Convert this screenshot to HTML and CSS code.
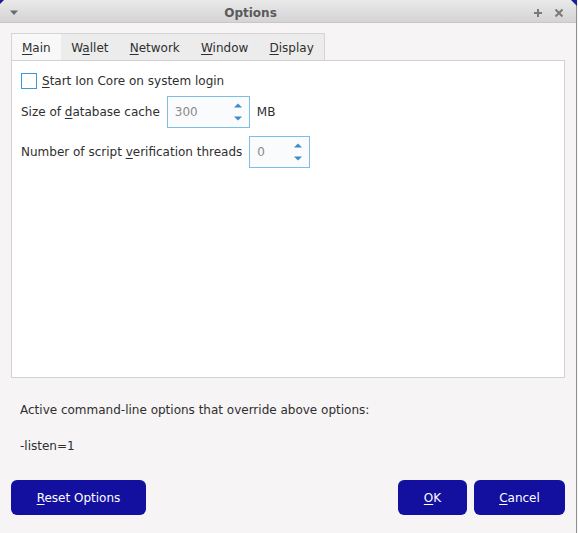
FILE: index.html
```html
<!DOCTYPE html>
<html>
<head>
<meta charset="utf-8">
<link rel="stylesheet" href="styles.css">
</head>
<body>
<div class="window">
  <div class="corner corner-tl"></div>
  <div class="corner corner-tr"></div>
  <div class="titlebar">
    <div class="tb-left">
      <svg width="10" height="6" viewBox="0 0 10 6"><path d="M1 0.5 L9 0.5 L5 5 Z" fill="#6a6a6a"/></svg>
    </div>
    <div class="tb-title">Options</div>
    <div class="tb-right">
      <svg width="10" height="10" viewBox="0 0 10 10"><path d="M5 1 V9 M1 5 H9" stroke="#7a7a7a" stroke-width="2"/></svg>
      <svg width="10" height="10" viewBox="0 0 10 10"><path d="M1.5 1.5 L8.5 8.5 M8.5 1.5 L1.5 8.5" stroke="#7a7a7a" stroke-width="2"/></svg>
    </div>
  </div>
  <div class="content">
    <div class="tabs">
      <div class="tab active"><u>M</u>ain</div>
      <div class="tab">W<u>a</u>llet</div>
      <div class="tab"><u>N</u>etwork</div>
      <div class="tab"><u>W</u>indow</div>
      <div class="tab"><u>D</u>isplay</div>
    </div>
    <div class="pane">
      <div class="row check-row">
        <span class="checkbox"></span>
        <span><u>S</u>tart Ion Core on system login</span>
      </div>
      <div class="row">
        <span>Size of <u>d</u>atabase cache</span>
        <div class="spin spin-wide">
          <span class="spin-val">300</span>
          <span class="arrows">
            <svg width="10" height="20" viewBox="0 0 10 20"><path d="M1 5.5 L9 5.5 L5 1.5 Z" fill="#3a8bc6"/><path d="M1 14.5 L9 14.5 L5 18.5 Z" fill="#3a8bc6"/></svg>
          </span>
        </div>
        <span class="unit">MB</span>
      </div>
      <div class="row">
        <span>Number of script <u>v</u>erification threads</span>
        <div class="spin spin-narrow">
          <span class="spin-val">0</span>
          <span class="arrows">
            <svg width="10" height="20" viewBox="0 0 10 20"><path d="M1 5.5 L9 5.5 L5 1.5 Z" fill="#3a8bc6"/><path d="M1 14.5 L9 14.5 L5 18.5 Z" fill="#3a8bc6"/></svg>
          </span>
        </div>
      </div>
    </div>
    <div class="info">Active command-line options that override above options:</div>
    <div class="info listen">-listen=1</div>
    <div class="buttons">
      <button class="btn btn-reset"><u>R</u>eset Options</button>
      <div class="spacer"></div>
      <button class="btn btn-ok"><u>O</u>K</button>
      <button class="btn btn-cancel"><u>C</u>ancel</button>
    </div>
  </div>
</div>
</body>
</html>
```

FILE: styles.css
```css
* { box-sizing: border-box; }
html, body { margin: 0; padding: 0; }
body {
  width: 578px;
  height: 533px;
  overflow: hidden;
  background: #f6f4f5;
  font-family: "DejaVu Sans", sans-serif;
  font-size: 12px;
  color: #2f2f2f;
}
u { text-decoration: underline; text-underline-offset: 2px; }
.window {
  position: relative;
  width: 577px;
  height: 533px;
  background: #f6f4f5;
  border-right: 1px solid #8f8f8f;
}
.corner {
  position: absolute;
  top: 0;
  width: 0; height: 0;
}
.corner-tl {
  left: 0;
  border-top: 4px solid #1b1f8f;
  border-right: 4px solid transparent;
}
.corner-tr {
  right: -1px;
  border-top: 6px solid #1b1f8f;
  border-left: 6px solid transparent;
}
.titlebar {
  height: 23px;
  display: flex;
  align-items: center;
  padding-top: 3px;
  background: linear-gradient(#e9e9e9, #d4d4d4);
  border-bottom: 1px solid #c8c8c8;
}
.tb-left {
  width: 30px;
  padding-left: 9px;
  display: flex;
  align-items: center;
}
.tb-title {
  flex: 1;
  text-align: center;
  font-weight: bold;
  font-size: 12px;
  color: #5a5a5a;
  padding-right: 5px;
}
.tb-right {
  width: 100px;
  display: flex;
  justify-content: flex-end;
  gap: 11px;
  padding-right: 12px;
}
.content {
  padding: 10px 11px 0 11px;
  display: flex;
  flex-direction: column;
  width: 100%;
}
.tabs {
  display: flex;
  height: 27px;
}
.tab {
  height: 27px;
  padding: 7px 10.6px 0 10.6px;
  background: #ececec;
  border-top: 1px solid #d4d4d4;
  color: #2f2f2f;
  font-size: 12px;
}
.tab:last-child { border-right: 1px solid #d4d4d4; }
.tab.active {
  background: #f8f8f8;
  border-left: 1px solid #d4d4d4;
  padding-left: 10px;
  padding-right: 10px;
}
.pane {
  height: 318px;
  background: #ffffff;
  border: 1px solid #d2d2d2;
  padding: 12px 9px;
  display: flex;
  flex-direction: column;
  gap: 8px;
  font-size: 12px;
}
.row {
  display: flex;
  align-items: center;
  gap: 7px;
}
.check-row { gap: 5px; margin-bottom: -1px; }
.checkbox {
  width: 16px; height: 16px;
  border: 1px solid #3b9ad9;
  background: #fff;
  display: inline-block;
}
.spin {
  height: 32px;
  border: 1px solid #7dbde6;
  background: #f9fbfd;
  display: flex;
  align-items: center;
  padding-left: 7px;
  justify-content: space-between;
  padding-right: 6px;
}
.spin-wide { width: 83px; }
.spin-narrow { width: 61px; }
.spin-val { color: #8a8a8a; }
.arrows { display: flex; align-items: center; }
.info {
  font-size: 12px;
  padding-left: 9px;
  margin-top: 25px;
}
.listen { margin-top: 22px; }
.buttons {
  display: flex;
  margin-top: 27px;
  gap: 7px;
}
.spacer { flex: 1; }
.btn {
  height: 35px;
  border: none;
  border-radius: 6px;
  background: #13109f;
  color: #ffffff;
  font-family: "DejaVu Sans", sans-serif;
  font-size: 12px;
  padding: 0;
}
.btn-reset { width: 135px; }
.btn-ok { width: 69px; }
.btn-cancel { width: 91px; }
```
